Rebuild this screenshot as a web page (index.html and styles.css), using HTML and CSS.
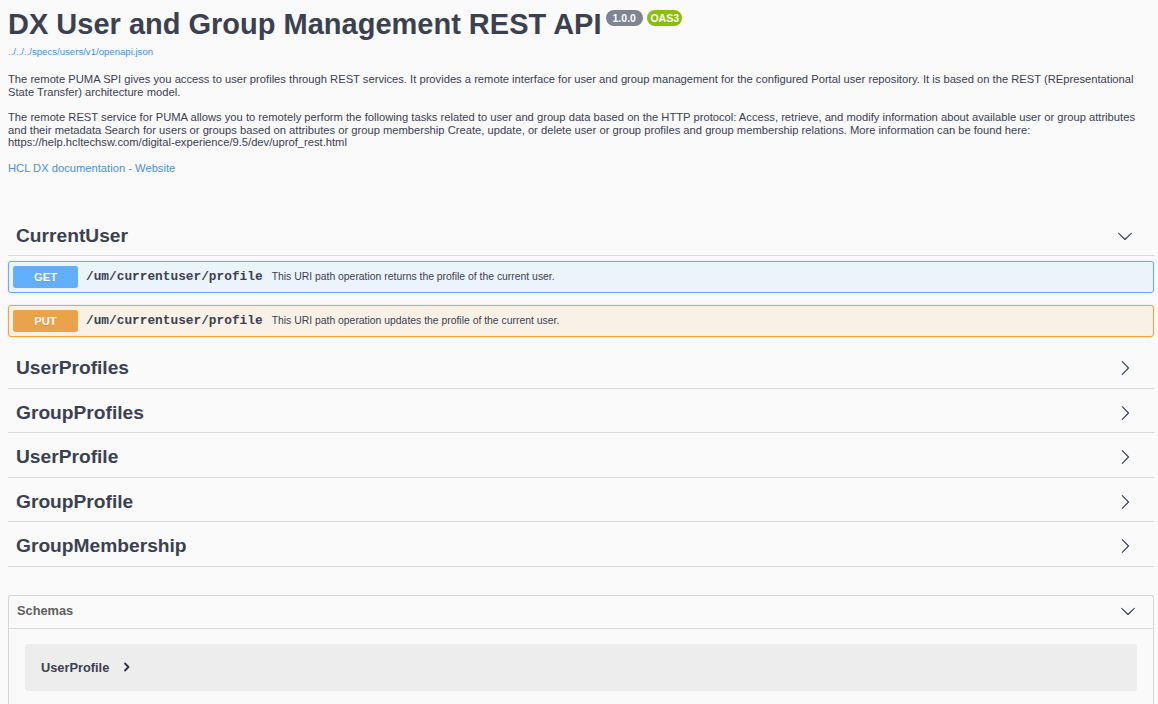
FILE: index.html
```html
<!DOCTYPE html>
<html lang="en">
<head>
<meta charset="utf-8">
<title>DX User and Group Management REST API</title>
<link rel="stylesheet" href="styles.css">
</head>
<body>
<div class="page">
  <header class="info">
    <h1 class="title">DX User and Group Management REST API<span class="badges"><span class="badge badge-version">1.0.0</span><span class="badge badge-oas">OAS3</span></span></h1>
    <a class="spec-url" href="#">../../../specs/users/v1/openapi.json</a>
    <div class="description">
      <p>The remote PUMA SPI gives you access to user profiles through REST services. It provides a remote interface for user and group management for the configured Portal user repository. It is based on the REST (REpresentational State Transfer) architecture model.</p>
      <p>The remote REST service for PUMA allows you to remotely perform the following tasks related to user and group data based on the HTTP protocol: Access, retrieve, and modify information about available user or group attributes and their metadata Search for users or groups based on attributes or group membership Create, update, or delete user or group profiles and group membership relations. More information can be found here: https://help.hcltechsw.com/digital-experience/9.5/dev/uprof_rest.html</p>
      <p><a class="doc-link" href="#">HCL DX documentation - Website</a></p>
    </div>
  </header>

  <section class="tag">
    <div class="tag-header">
      <h3 class="tag-name">CurrentUser</h3>
      <svg class="chev" viewBox="0 0 20 20" width="16" height="16"><path d="M17.418 6.109c.272-.268.709-.268.979 0s.271.701 0 .969l-7.908 7.83c-.27.268-.707.268-.979 0l-7.908-7.830c-.27-.268-.27-.701 0-.969.271-.268.709-.268.979 0L10 13.25l7.418-7.141z"/></svg>
    </div>
    <div class="ops">
      <div class="op op-get">
        <span class="method">GET</span>
        <span class="path">/um/currentuser/profile</span>
        <span class="summary">This URI path operation returns the profile of the current user.</span>
      </div>
      <div class="op op-put">
        <span class="method">PUT</span>
        <span class="path">/um/currentuser/profile</span>
        <span class="summary">This URI path operation updates the profile of the current user.</span>
      </div>
    </div>
  </section>

  <section class="tag">
    <div class="tag-header">
      <h3 class="tag-name">UserProfiles</h3>
      <svg class="chev" viewBox="0 0 20 20" width="16" height="16"><path d="M13.25 10L6.109 2.58a.697.697 0 0 1 0-.979.68.68 0 0 1 .969 0l7.83 7.908a.697.697 0 0 1 0 .979l-7.83 7.908a.68.68 0 0 1-.969 0 .697.697 0 0 1 0-.979L13.25 10z"/></svg>
    </div>
  </section>
  <section class="tag">
    <div class="tag-header">
      <h3 class="tag-name">GroupProfiles</h3>
      <svg class="chev" viewBox="0 0 20 20" width="16" height="16"><path d="M13.25 10L6.109 2.58a.697.697 0 0 1 0-.979.68.68 0 0 1 .969 0l7.83 7.908a.697.697 0 0 1 0 .979l-7.83 7.908a.68.68 0 0 1-.969 0 .697.697 0 0 1 0-.979L13.25 10z"/></svg>
    </div>
  </section>
  <section class="tag">
    <div class="tag-header">
      <h3 class="tag-name">UserProfile</h3>
      <svg class="chev" viewBox="0 0 20 20" width="16" height="16"><path d="M13.25 10L6.109 2.58a.697.697 0 0 1 0-.979.68.68 0 0 1 .969 0l7.83 7.908a.697.697 0 0 1 0 .979l-7.83 7.908a.68.68 0 0 1-.969 0 .697.697 0 0 1 0-.979L13.25 10z"/></svg>
    </div>
  </section>
  <section class="tag">
    <div class="tag-header">
      <h3 class="tag-name">GroupProfile</h3>
      <svg class="chev" viewBox="0 0 20 20" width="16" height="16"><path d="M13.25 10L6.109 2.58a.697.697 0 0 1 0-.979.68.68 0 0 1 .969 0l7.83 7.908a.697.697 0 0 1 0 .979l-7.83 7.908a.68.68 0 0 1-.969 0 .697.697 0 0 1 0-.979L13.25 10z"/></svg>
    </div>
  </section>
  <section class="tag">
    <div class="tag-header">
      <h3 class="tag-name">GroupMembership</h3>
      <svg class="chev" viewBox="0 0 20 20" width="16" height="16"><path d="M13.25 10L6.109 2.58a.697.697 0 0 1 0-.979.68.68 0 0 1 .969 0l7.83 7.908a.697.697 0 0 1 0 .979l-7.83 7.908a.68.68 0 0 1-.969 0 .697.697 0 0 1 0-.979L13.25 10z"/></svg>
    </div>
  </section>

  <section class="models">
    <div class="models-header">
      <h4 class="models-title">Schemas</h4>
      <svg class="chev" viewBox="0 0 20 20" width="16" height="16"><path d="M17.418 6.109c.272-.268.709-.268.979 0s.271.701 0 .969l-7.908 7.83c-.27.268-.707.268-.979 0l-7.908-7.83c-.27-.268-.27-.701 0-.969.271-.268.709-.268.979 0L10 13.25l7.418-7.141z"/></svg>
    </div>
    <div class="models-body">
      <div class="model-container">
        <span class="model-title">UserProfile</span>
        <svg class="model-toggle" viewBox="0 0 8 10" width="8" height="10"><path d="M2 1.5 L5.5 5 L2 8.5"/></svg>
      </div>
    </div>
  </section>
</div>
</body>
</html>
```

FILE: styles.css
```css
html, body {
  margin: 0;
  padding: 0;
  background: #fafafa;
}

body {
  font-family: "Liberation Sans", Arial, Helvetica, sans-serif;
  color: #3b4151;
}

.page {
  padding: 8px 4px 0 8px;
}

/* ---------- info ---------- */
.info {
  margin-bottom: 42px;
}

.title {
  margin: 0;
  font-size: 29px;
  line-height: 32px;
  font-weight: 700;
  color: #3b4151;
}

.badges {
  display: inline-flex;
  gap: 4px;
  vertical-align: top;
  margin-top: 2px;
  margin-left: 4px;
}

.badge {
  display: inline-block;
  height: 16px;
  line-height: 16px;
  font-size: 10.5px;
  font-weight: 700;
  color: #fff;
  border-radius: 10px;
}

.badge-version {
  background: #7d8492;
  padding: 0 7px;
}

.badge-oas {
  background: #89bf04;
  padding: 0 3.5px;
}

.spec-url {
  display: block;
  margin-top: 6px;
  font-size: 9.6px;
  line-height: 12px;
  color: #4990e2;
  text-decoration: none;
}

.description {
  margin-top: 15px;
  font-size: 11.2px;
  line-height: 12.5px;
  color: #3b4151;
}

.description p {
  margin: 0 0 13px;
}

.description p:last-child {
  margin-bottom: 0;
}

.doc-link {
  color: #4990e2;
  text-decoration: none;
}

/* ---------- tags ---------- */
.tag-header {
  box-sizing: border-box;
  height: 40px;
  margin-bottom: 4.5px;
  padding: 0 21px 0 8px;
  display: flex;
  align-items: center;
  justify-content: space-between;
  border-bottom: 1px solid #d9dadd;
}

.tag-name {
  margin: 0;
  font-size: 19.2px;
  font-weight: 700;
  color: #3b4151;
}

.chev {
  display: block;
  fill: #3b4151;
}

.ops {
  display: flex;
  flex-direction: column;
  gap: 12px;
  margin-bottom: 12px;
}

.op {
  box-sizing: border-box;
  height: 32px;
  padding: 0 4px;
  display: flex;
  align-items: center;
  border: 1px solid;
  border-radius: 3px;
  box-shadow: 0 0 2px rgba(0, 0, 0, .15);
}

.op-get {
  background: #ebf3fb;
  border-color: #61affe;
}

.op-put {
  background: #faf1e6;
  border-color: #fca130;
}

.method {
  width: 65px;
  height: 22px;
  line-height: 22px;
  text-align: center;
  font-size: 11.2px;
  font-weight: 700;
  color: #fff;
  border-radius: 2.4px;
  text-shadow: 0 1px 0 rgba(0, 0, 0, .1);
  flex: none;
}

.op-get .method {
  background: #61affe;
}

.op-put .method {
  background: #eaa24b;
}

.path {
  padding: 0 8px;
  font-family: "Liberation Mono", "Courier New", monospace;
  font-size: 12.8px;
  font-weight: 700;
  color: #3b4151;
}

.summary {
  padding-left: 1px;
  font-size: 10.4px;
  color: #3b4151;
}

/* ---------- models ---------- */
.models {
  margin-top: 28px;
  border: 1px solid #d4d5d8;
  border-bottom: none;
  border-radius: 3px 3px 0 0;
}

.models-header {
  box-sizing: border-box;
  height: 33px;
  padding: 0 17px 2px 8px;
  display: flex;
  align-items: center;
  justify-content: space-between;
  border-bottom: 1px solid #d9dadd;
}

.models-title {
  margin: 0;
  font-size: 12.8px;
  font-weight: 700;
  color: #606060;
}

.models-body {
  padding: 15px 16px 13px;
}

.model-container {
  height: 47px;
  padding: 0 16px;
  display: flex;
  align-items: center;
  gap: 14px;
  background: #ededed;
  border-radius: 3px;
}

.model-title {
  font-size: 12.8px;
  font-weight: 700;
  color: #3b4151;
}

.model-toggle {
  display: block;
  fill: none;
  stroke: #2f3440;
  stroke-width: 1.8;
  stroke-linecap: round;
  stroke-linejoin: round;
}
```
